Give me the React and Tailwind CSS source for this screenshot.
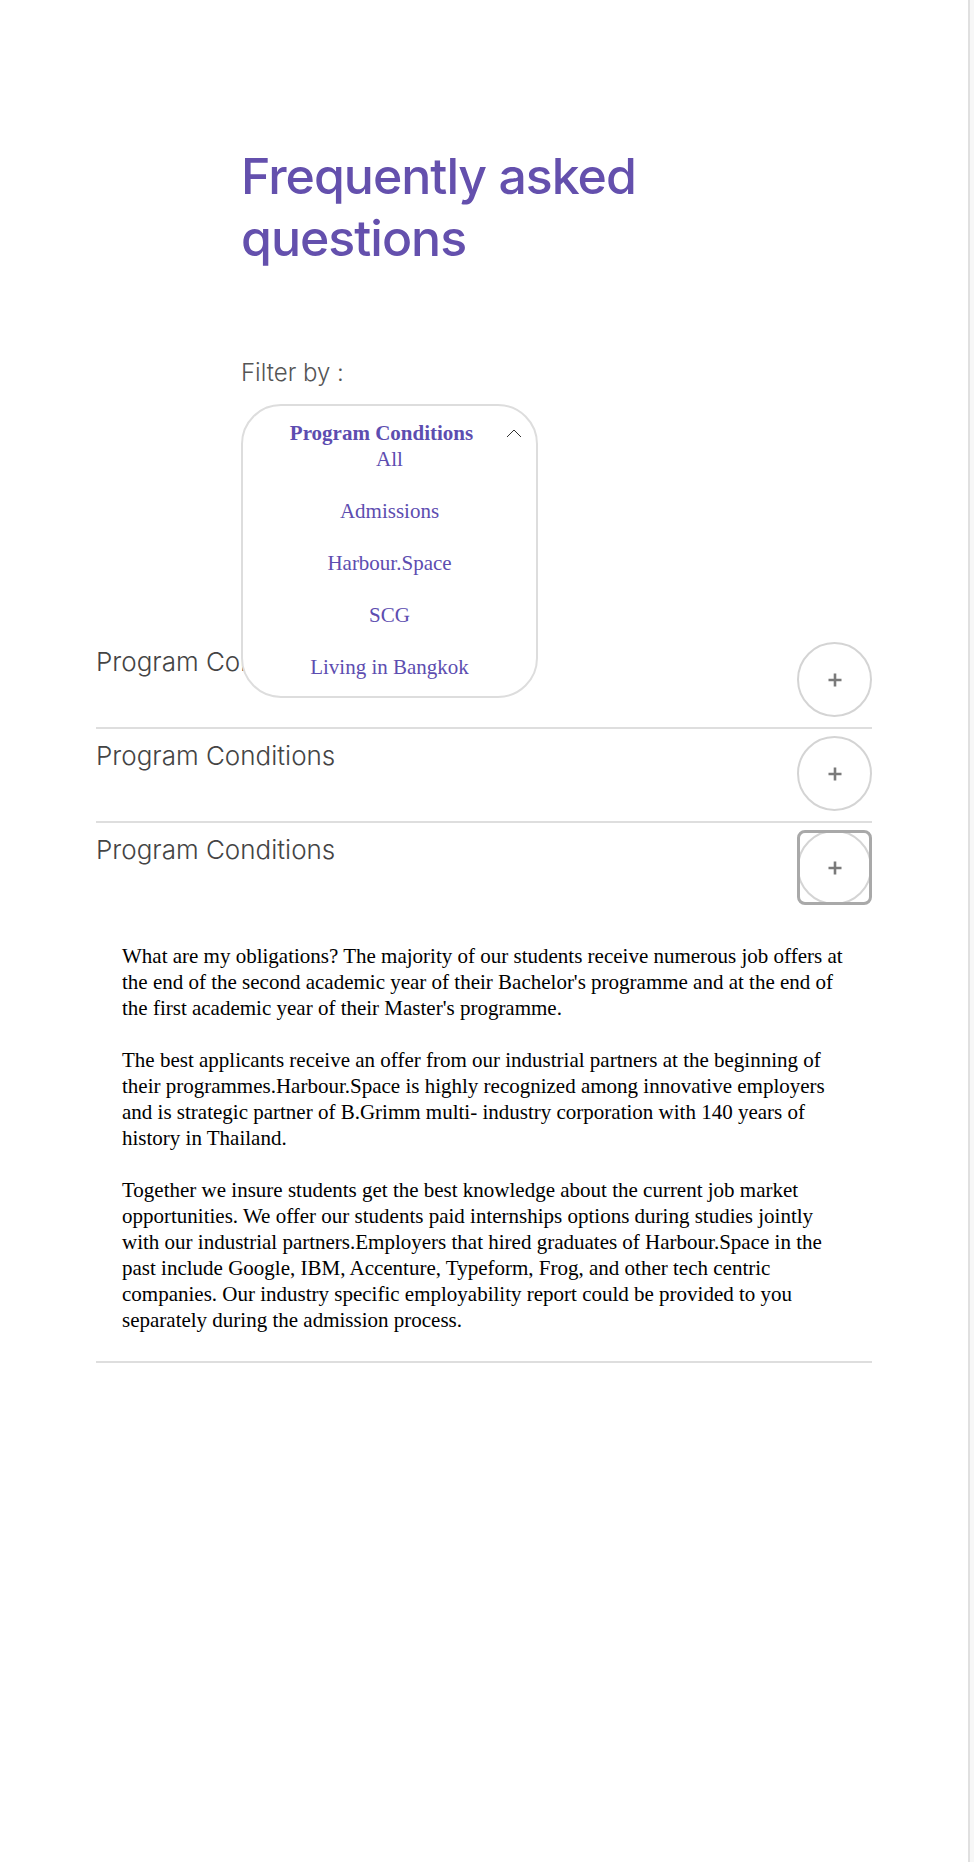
import { useState } from "react";

const filters = ["All", "Admissions", "Harbour.Space", "SCG", "Living in Bangkok"];

const answer = [
  "What are my obligations? The majority of our students receive numerous job offers at the end of the second academic year of their Bachelor's programme and at the end of the first academic year of their Master's programme.",
  "The best applicants receive an offer from our industrial partners at the beginning of their programmes.Harbour.Space is highly recognized among innovative employers and is strategic partner of B.Grimm multi- industry corporation with 140 years of history in Thailand.",
  "Together we insure students get the best knowledge about the current job market opportunities. We offer our students paid internships options during studies jointly with our industrial partners.Employers that hired graduates of Harbour.Space in the past include Google, IBM, Accenture, Typeform, Frog, and other tech centric companies. Our industry specific employability report could be provided to you separately during the admission process.",
];

function PlusIcon() {
  return (
    <svg width="16" height="16" viewBox="0 0 16 16" fill="none">
      <path d="M8 1.5v13M1.5 8h13" stroke="#7a7a7a" strokeWidth="2.6" />
    </svg>
  );
}

function Row({ open, focused, children }) {
  return (
    <div className="border-b-2 border-[#dedede]">
      <div className="flex items-start justify-between pt-[7px] pb-[10px]">
        <h3 className="text-[26px] font-light text-[#444]">Program Conditions</h3>
        <button className="relative flex h-[75px] w-[75px] items-center justify-center rounded-full border-2 border-[#d4d4d4] bg-white">
          <PlusIcon />
          {focused && (
            <span className="absolute -inset-[2px] rounded-[8px] border-[3px] border-[#a9a9a9]"></span>
          )}
        </button>
      </div>
      {open && children}
    </div>
  );
}

export default function App() {
  const [active] = useState("Program Conditions");
  return (
    <div className="flex min-h-[1862px] bg-white" style={{ fontFamily: "Inter, 'Noto Sans', sans-serif" }}>
      <main className="flex-1">
        <div className="mx-auto w-[776px] pt-[145px]">
          <div className="pl-[145px]">
            <h1 className="text-[50px] font-medium leading-[62px] tracking-[-1px] text-[#6450ad]">
              Frequently asked
              <br />
              questions
            </h1>
            <p className="mt-[86px] text-[24px] font-light text-[#555]">Filter by :</p>
            <div className="relative mt-[13px] h-[231px]">
              <div className="absolute left-0 top-0 z-10 w-[297px] rounded-[40px] border-2 border-[#dddddd] bg-white pt-[14px] pb-[16px] text-[21px] leading-[26px] text-[#5d4db0] font-['Liberation_Serif',serif]">
                <div className="flex items-center px-[14px]">
                  <span className="flex-1 text-center font-bold">{active}</span>
                  <svg width="16" height="9" viewBox="0 0 16 9" fill="none">
                    <path d="M1 8l7-7 7 7" stroke="#333" strokeWidth="1" />
                  </svg>
                </div>
                <ul className="flex flex-col gap-[26px] text-center">
                  {filters.map((f) => (
                    <li key={f}>{f}</li>
                  ))}
                </ul>
              </div>
            </div>
          </div>

          <Row />
          <Row />
          <Row open focused>
            <div className="space-y-[26px] px-[26px] pt-[28px] pb-[28px] text-[21px] leading-[26px] text-black font-['Liberation_Serif',serif]">
              {answer.map((p, i) => (
                <p key={i}>{p}</p>
              ))}
            </div>
          </Row>
        </div>
      </main>
      <div className="w-[6px] border-l-2 border-[#e0e0e0] bg-[#f7f7f7]"></div>
    </div>
  );
}
